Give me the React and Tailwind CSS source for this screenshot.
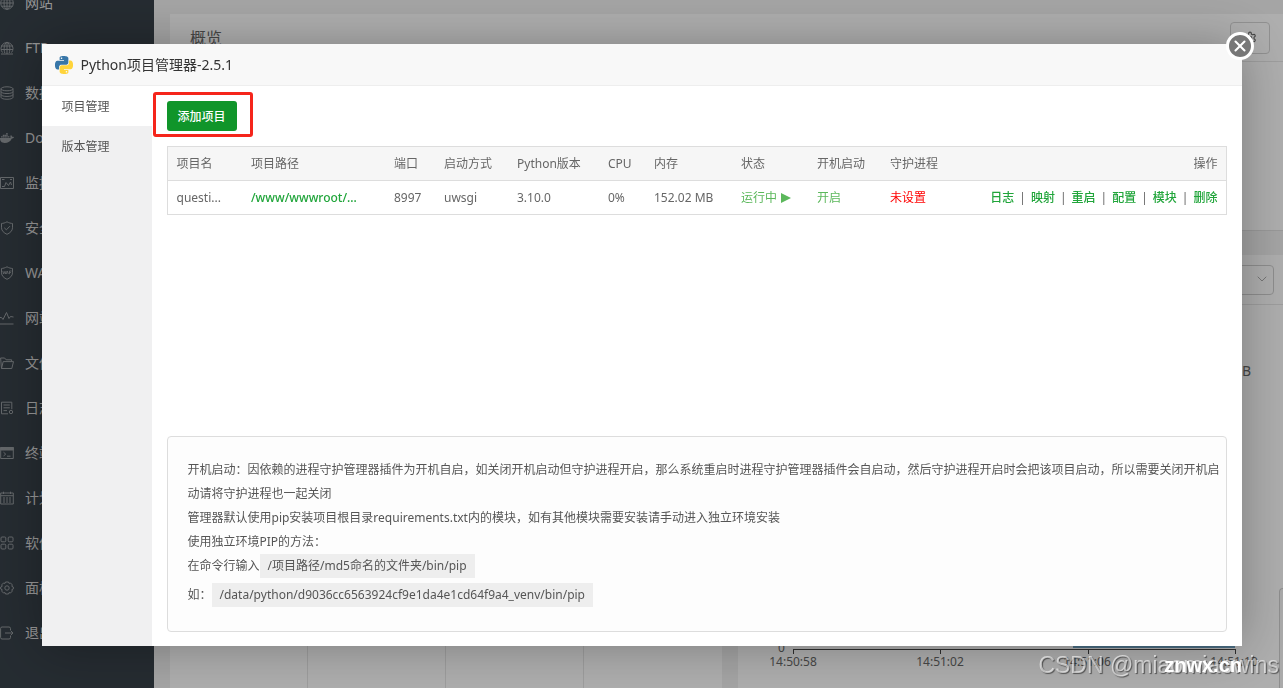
import { LuSettings, LuChevronDown } from 'react-icons/lu';
import { FaDocker } from 'react-icons/fa';

function LineIcon({ className, children }) {
    return (
        <svg viewBox="0 0 14 14" className={className} fill="none" stroke="currentColor" strokeLinejoin="round">
            {children}
        </svg>
    );
}

function SiteIcon(props) {
    return (
        <LineIcon {...props}>
            <circle cx="7" cy="7" r="6.3" />
            <ellipse cx="7" cy="7" rx="3" ry="6.3" />
            <path d="M7 .7v12.6M.7 7h12.6M1.500 3.800h11M1.500 10.200h11" />
        </LineIcon>
    );
}

function FtpIcon(props) {
    return (
        <LineIcon {...props}>
            <path d="M2.500 11.500a6 6 0 1 1 9 0M4.800 12C3.500 8 4 3 7 1c3 2 3.500 7 2.200 11M7 1v12M1 5h12M1 8.500h12M1 13h12" />
        </LineIcon>
    );
}

function DatabaseIcon(props) {
    return (
        <LineIcon {...props}>
            <ellipse cx="7" cy="2.800" rx="6" ry="2" />
            <path d="M1 2.800v8.500c0 2.600 12 2.600 12 0V2.800M1 5.600c0 2.600 12 2.600 12 0M1 8.500c0 2.600 12 2.600 12 0" />
        </LineIcon>
    );
}

function MonitorIcon(props) {
    return (
        <LineIcon {...props}>
            <path d="M.5 1.500h13v11H.5zM2 3.500h2.500M2 10.500h2.500l1.500-4 2.500 3 2-3.500 1 3M10 3.500h2" />
        </LineIcon>
    );
}

function ShieldIcon(props) {
    return (
        <LineIcon {...props}>
            <path d="M7 .8c2 1.200 3.800 1.500 5.500 1.700v4.300c0 3-2.500 5.200-5.500 6.500-3-1.300-5.500-3.500-5.500-6.500V2.500C3.200 2.300 5 2 7 .8zM4.300 6.800L6.400 8.800l3.500-3.600" />
        </LineIcon>
    );
}

function WafIcon(props) {
    return (
        <LineIcon {...props}>
            <path d="M7 .8c2 1.200 3.800 1.500 5.500 1.700v4.300c0 3-2.500 5.200-5.500 6.500-3-1.300-5.500-3.500-5.500-6.500V2.500C3.200 2.300 5 2 7 .8z" />
            <path d="M2.800 5l.8 3 .9-2.400.9 2.400.6-3M6.300 8l1-3 1 3M9.500 8.200V5h2M9.500 6.500h1.600" strokeWidth="0.8" />
        </LineIcon>
    );
}

function TrafficIcon(props) {
    return (
        <LineIcon {...props}>
            <path d="M0 6.500h1.500L3 8.500 6.500 1.500 9 7.500l1.500-2 3 .5M0 13h13.500" />
        </LineIcon>
    );
}

function FolderIcon(props) {
    return (
        <LineIcon {...props}>
            <path d="M1.500 12.500L.6 2h4l1.500 1.800h5.500v1.800M1.500 12.500h10.300l1.700-6.900H3.200z" />
        </LineIcon>
    );
}

function LogIcon(props) {
    return (
        <LineIcon {...props}>
            <path d="M8 12.800H1.500V1.200h10.300v7M3.500 4h6.300M3.500 6.800h6.300M3.500 9.600h3.500" />
            <circle cx="11" cy="11" r="1.700" />
        </LineIcon>
    );
}

function TerminalIcon(props) {
    return (
        <LineIcon {...props}>
            <path d="M.7 1.500h12.600v11H.7z" />
            <path d="M.7 1.500h12.600V4H.7z" fill="currentColor" />
            <path d="M3.500 6.200l2.200 1.900-2.200 1.900M7 10.200h3.500" />
        </LineIcon>
    );
}

function CalendarIcon(props) {
    return (
        <LineIcon {...props}>
            <path d="M.7 2h12.600v11H.7zM.7 4.700h12.600M3.500.7V3M10.500.7V3" />
            <path d="M3 7h8M3 9h8M3 11h8" strokeDasharray="2 1" />
        </LineIcon>
    );
}

function GridIcon(props) {
    return (
        <LineIcon {...props}>
            <rect x="1" y="1" width="4.800" height="4.800" rx="1" />
            <rect x="8.200" y="1" width="4.800" height="4.800" rx="1" />
            <rect x="1" y="8.200" width="4.800" height="4.800" rx="1" />
            <rect x="8.200" y="8.200" width="4.800" height="4.800" rx="1" />
        </LineIcon>
    );
}

function GearIcon(props) {
    return (
        <LineIcon {...props}>
            <path d="M5.500 1h3l.5 1.400 1.500-.4 1.800 1.900-.5 1.400 1.500.7v2l-1.500.7.5 1.400-1.800 1.900-1.500-.4L8.500 13h-3L5 11.600l-1.500.4-1.800-1.900.5-1.400L.7 8V6l1.500-.7-.5-1.400L3.500 2l1.500.4z" />
            <circle cx="7" cy="7" r="2.200" />
        </LineIcon>
    );
}

function LogoutIcon(props) {
    return (
        <LineIcon {...props}>
            <path d="M10.500 4V2.500a1.500 1.500 0 0 0-1.500-1.500H2A1.500 1.500 0 0 0 .6 2.500v9A1.500 1.500 0 0 0 2 13h7a1.500 1.500 0 0 0 1.500-1.500V10M5 7h8M10.500 4.500L13 7l-2.500 2.500" />
        </LineIcon>
    );
}

function PythonLogo() {
    return (
        <svg viewBox="0 0 24 24" className="size-[18px]" aria-hidden="true">
            <path
                fill="#3776a8"
                fillRule="evenodd"
                d="M14.25.18l.9.2.73.26.59.3.45.32.34.34.25.34.16.33.1.3.04.26.02.2-.01.13V8.5l-.05.63-.13.55-.21.46-.26.38-.3.31-.33.25-.35.19-.35.14-.33.1-.3.07-.26.04-.21.02H8.77l-.69.05-.59.14-.5.22-.41.27-.33.32-.27.35-.2.36-.15.37-.1.35-.07.32-.04.27-.02.21v3.06H3.17l-.21-.03-.28-.07-.32-.12-.35-.18-.36-.26-.36-.36-.35-.46-.32-.59-.28-.73-.21-.88-.14-1.05-.05-1.23.06-1.22.16-1.04.24-.87.32-.71.36-.57.4-.44.42-.33.42-.24.4-.16.36-.1.32-.05.24-.01h.16l.06.01h8.16v-.83H6.18l-.01-2.75-.02-.37.05-.34.11-.31.17-.28.25-.26.31-.23.38-.2.44-.18.51-.15.58-.12.64-.1.71-.06.77-.04.84-.02 1.27.05zm-6.3 1.98l-.23.33-.08.41.08.41.23.34.33.22.41.09.41-.09.33-.22.23-.34.08-.41-.08-.41-.23-.33-.33-.22-.41-.09-.41.09z"
            />
            <path
                fill="#ffd43b"
                fillRule="evenodd"
                d="M21.04 6.11l.28.06.32.12.35.18.36.27.36.35.35.47.32.59.28.73.21.88.14 1.04.05 1.23-.06 1.23-.16 1.04-.24.86-.32.71-.36.57-.4.45-.42.33-.42.24-.4.16-.36.09-.32.05-.24.02-.16-.01h-8.22v.82h5.84l.01 2.76.02.36-.05.34-.11.31-.17.29-.25.25-.31.24-.38.2-.44.17-.51.15-.58.13-.64.09-.71.07-.77.04-.84.01-1.27-.04-1.07-.14-.9-.2-.73-.25-.59-.3-.45-.33-.34-.34-.25-.34-.16-.33-.1-.3-.04-.25-.02-.2.01-.13v-5.34l.05-.64.13-.54.21-.46.26-.38.3-.32.33-.24.35-.2.35-.14.33-.1.3-.06.26-.04.21-.02.13-.01h5.84l.69-.05.59-.14.5-.21.41-.28.33-.32.27-.35.2-.36.15-.36.1-.35.07-.32.04-.28.02-.21V6.07h2.09l.14.01zm-6.47 14.25l-.23.33-.08.41.08.41.23.33.33.23.41.08.41-.08.33-.23.23-.33.08-.41-.08-.41-.23-.33-.33-.23-.41-.08-.41.08z"
            />
        </svg>
    );
}

const navItems = [
    { label: '网站', icon: SiteIcon },
    { label: 'FTP', icon: FtpIcon },
    { label: '数据库', icon: DatabaseIcon },
    { label: 'Docker', icon: FaDocker },
    { label: '监控', icon: MonitorIcon },
    { label: '安全', icon: ShieldIcon },
    { label: 'WAF', icon: WafIcon },
    { label: '网站监控', icon: TrafficIcon },
    { label: '文件', icon: FolderIcon },
    { label: '日志', icon: LogIcon },
    { label: '终端', icon: TerminalIcon },
    { label: '计划任务', icon: CalendarIcon },
    { label: '软件商店', icon: GridIcon },
    { label: '面板设置', icon: GearIcon },
    { label: '退出', icon: LogoutIcon },
];

const columns = [
    { title: '项目名', width: 'w-[75px]' },
    { title: '项目路径', width: 'w-[143px]' },
    { title: '端口', width: 'w-[50px]' },
    { title: '启动方式', width: 'w-[73px]' },
    { title: 'Python版本', width: 'w-[91px]' },
    { title: 'CPU', width: 'w-[46px]' },
    { title: '内存', width: 'w-[87px]' },
    { title: '状态', width: 'w-[76px]' },
    { title: '开机启动', width: 'w-[73px]' },
    { title: '守护进程', width: 'w-[73px]' },
];

const actions = ['日志', '映射', '重启', '配置', '模块', '删除'];

function Sidebar() {
    return (
        <nav className="w-[154px] shrink-0 bg-[#363f47] text-sm text-[#d6d6d6]">
            <ul className="-mt-5">
                {navItems.map(({ label, icon: Icon }) => (
                    <li key={label}>
                        <a href="#" className="flex h-[45px] items-center gap-[11px] whitespace-nowrap">
                            <Icon className="size-3.5 shrink-0 text-[#8f9498]" />
                            {label}
                        </a>
                    </li>
                ))}
            </ul>
        </nav>
    );
}

function TrafficChart() {
    const times = ['14:50:58', '14:51:02', '14:51:06', '14:51:10'];

    return (
        <svg className="h-11 w-full shrink-0 overflow-visible text-xs" fill="#666">
            <text x="40" y="8">0</text>
            <path d="M335 3h162" stroke="#6a9cbc" strokeWidth="2" />
            <path d="M55 5.500h442M55.500 5v5M202.500 5v5M350.500 5v5M497.500 5v5" stroke="#444" fill="none" />
            {times.map((time, i) => (
                <text key={time} x={55 + i * 147} y="22" textAnchor="middle">
                    {time}
                </text>
            ))}
        </svg>
    );
}

function Dashboard() {
    return (
        <main className="flex min-w-0 flex-1 flex-col pl-4 pt-3.5 text-[#666]">
            <section className="h-[217px] shrink-0 border-b border-[#dcdcdc] bg-[#fafafa]">
                <div className="flex h-12 items-center justify-between border-b border-[#e2e2e2] pl-5 pr-[13px]">
                    <h2 className="text-base">概览</h2>
                    <button type="button" aria-label="设置" className="flex h-8 w-10 items-center justify-center rounded border border-[#d0d0d0]">
                        <LuSettings className="size-3.5" />
                    </button>
                </div>
            </section>
            <div className="-mr-[7px] mt-6 flex min-h-0 flex-1 gap-4">
                <section className="flex flex-1 flex-col bg-[#fafafa]">
                    <div className="h-[50px] border-b border-[#e2e2e2]" />
                    <div className="grid flex-1 grid-cols-4 divide-x divide-[#e2e2e2]">
                        <div />
                        <div />
                        <div />
                        <div />
                    </div>
                </section>
                <section className="flex flex-1 flex-col bg-[#fafafa]">
                    <div className="flex h-[50px] items-center justify-end border-b border-[#e2e2e2] pr-4">
                        <div className="relative">
                            <select aria-label="网卡" className="h-[30px] w-28 appearance-none rounded border border-[#ccc]">
                                <option></option>
                            </select>
                            <LuChevronDown className="pointer-events-none absolute right-1 top-1.5 size-4 text-[#aaa]" strokeWidth={1.5} />
                        </div>
                    </div>
                    <div className="flex-1 pr-[39px] pt-[54px] text-right text-sm leading-6">12.6 KB</div>
                    <TrafficChart />
                </section>
            </div>
        </main>
    );
}

function ProjectTable() {
    return (
        <table className="mt-[15px] w-full table-fixed border border-[#ddd] text-left text-[#666]">
            <thead>
                <tr className="h-[34px] border-b border-[#ddd] bg-[#f6f6f6]">
                    {columns.map((column) => (
                        <th key={column.title} className={`pl-[9px] font-normal whitespace-nowrap ${column.width}`}>
                            {column.title}
                        </th>
                    ))}
                    <th className="px-2 text-right font-normal">操作</th>
                </tr>
            </thead>
            <tbody>
                <tr className="h-[34px] whitespace-nowrap">
                    <td className="pl-[9px]">questi...</td>
                    <td className="pl-[9px]">
                        <a href="#" className="font-medium text-[#20a53a]">/www/wwwroot/...</a>
                    </td>
                    <td className="pl-[9px]">8997</td>
                    <td className="pl-[9px]">uwsgi</td>
                    <td className="pl-[9px]">3.10.0</td>
                    <td className="pl-[9px]">0%</td>
                    <td className="pl-[9px]">152.02 MB</td>
                    <td className="pl-[9px]">
                        <a href="#" className="flex items-center gap-1 text-[#5cb85c]">
                            运行中
                            <svg viewBox="0 0 10 12" className="h-3 w-2.5" fill="currentColor">
                                <path d="M0 1l10 5-10 5z" />
                            </svg>
                        </a>
                    </td>
                    <td className="pl-[9px]">
                        <a href="#" className="text-[#5cb85c]">开启</a>
                    </td>
                    <td className="pl-[9px]">
                        <a href="#" className="text-[#f00]">未设置</a>
                    </td>
                    <td className="px-2">
                        <div className="flex justify-end gap-[5px]">
                            {actions.map((action, i) => (
                                <span key={action} className="flex gap-[5px]">
                                    {i > 0 && <span>|</span>}
                                    <a href="#" className="font-medium text-[#20a53a]">{action}</a>
                                </span>
                            ))}
                        </div>
                    </td>
                </tr>
            </tbody>
        </table>
    );
}

function HelpBox() {
    return (
        <div className="mt-auto rounded border border-[#ddd] bg-[#fdfdfd] pb-[19px] pl-5 pr-1 pt-[21px] leading-6 text-[#555]">
            <p>
                开机启动：因依赖的进程守护管理器插件为开机自启，如关闭开机启动但守护进程开启，那么系统重启时进程守护管理器插件会自启动，然后守护进程开启时会把该项目启动，所以需要关闭开机启动请将守护进程也一起关闭
            </p>
            <p>管理器默认使用pip安装项目根目录requirements.txt内的模块，如有其他模块需要安装请手动进入独立环境安装</p>
            <p>使用独立环境PIP的方法：</p>
            <p className="flex">
                在命令行输入<span className="bg-[#eee] px-2">/项目路径/md5命名的文件夹/bin/pip</span>
            </p>
            <p className="my-[5px] flex">
                如：<span className="bg-[#eee] px-2">/data/python/d9036cc6563924cf9e1da4e1cd64f9a4_venv/bin/pip</span>
            </p>
        </div>
    );
}

function PluginDialog() {
    return (
        <div className="fixed inset-0 flex items-center justify-center bg-black/30 px-10 pt-0.5">
            <div
                role="dialog"
                aria-labelledby="dialog-title"
                className="relative flex w-full max-w-[1200px] flex-col bg-white text-xs shadow-[1px_1px_50px_rgba(0,0,0,0.3)]"
            >
                <header className="flex h-[42px] items-center gap-2 border-b border-[#eee] bg-[#f8f8f8] pl-[13px] text-sm text-[#333]">
                    <PythonLogo />
                    <h1 id="dialog-title">Python项目管理器-2.5.1</h1>
                </header>
                <button
                    type="button"
                    aria-label="关闭"
                    className="absolute -right-3 -top-3 flex size-7 items-center justify-center rounded-full border-[3px] border-white bg-[#777] text-white"
                >
                    <svg viewBox="0 0 12 12" className="size-3" fill="none" stroke="currentColor" strokeWidth="2" strokeLinecap="round">
                        <path d="M1.500 1.500l9 9M10.500 1.500l-9 9" />
                    </svg>
                </button>
                <div className="flex min-h-[560px]">
                    <div className="w-[110px] shrink-0 bg-[#f0f0f1] text-[#555]">
                        <button type="button" className="block h-10 w-full bg-white pl-5 pt-0.5 text-left">项目管理</button>
                        <button type="button" className="block h-10 w-full pl-5 pt-0.5 text-left">版本管理</button>
                    </div>
                    <div className="flex min-w-0 flex-1 flex-col px-[15px] pb-3.5 pt-[15px]">
                        <div className="relative self-start">
                            <button type="button" className="h-[30px] w-[70px] rounded-[3px] bg-[#10952a] pt-0.5 font-medium text-white">
                                添加项目
                            </button>
                            <div className="pointer-events-none absolute -bottom-1.5 -left-3.5 -right-4 -top-[9px] rounded-[3px] border-3 border-[#f5251b]" />
                        </div>
                        <ProjectTable />
                        <HelpBox />
                    </div>
                </div>
            </div>
        </div>
    );
}

export default function App() {
    return (
        <div className="flex h-screen overflow-hidden bg-[#ececec] font-['Noto_Sans','Noto_Sans_CJK_SC',sans-serif]">
            <Sidebar />
            <Dashboard />
            <div className="fixed bottom-0 right-0 h-[100px] w-1 rounded-tl border-l border-t border-[#ccc] bg-[#f4f4f4]" />
            <PluginDialog />
            <div className="fixed bottom-1.5 right-1 font-['Liberation_Sans',sans-serif] text-[23px] text-white/60 [text-shadow:1px_1px_1px_rgba(0,0,0,0.5)]">
                CSDN @miaomiaowins
            </div>
            <div className="fixed bottom-[9px] right-[41px] font-['Liberation_Sans',sans-serif] text-xl font-bold text-white">
                znwx.cn
            </div>
        </div>
    );
}
